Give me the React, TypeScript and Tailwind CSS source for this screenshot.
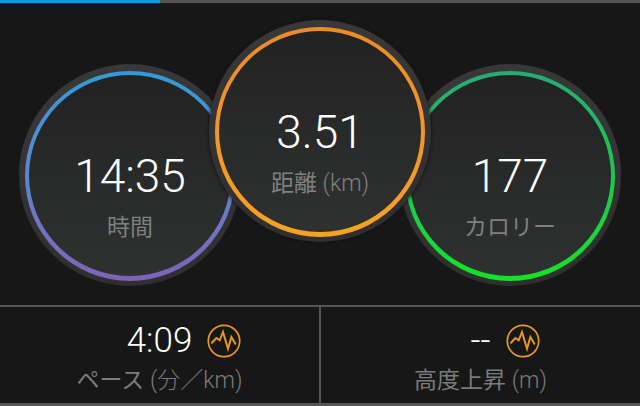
const jp = "font-['Roboto','Noto_Sans_CJK_JP',sans-serif]";

function PulseIcon() {
    return (
        <svg width="34" height="34" viewBox="0 0 34 34" fill="none" className="absolute left-full top-1/2 ml-[15px] -translate-y-1/2">
            <circle cx="17" cy="17" r="15.7" stroke="#e59a1e" strokeWidth="1.7" />
            <path d="M5 18.7 L9.4 14 L12.7 16.3 L16 8 L21 24.7 L24.4 13 L28.4 19.7" stroke="#e59a1e" strokeWidth="2" strokeLinejoin="miter" strokeLinecap="round" />
        </svg>
    );
}

function Dial({ value, label, unit, rim, outer }: { value: string; label: string; unit?: string; rim: string; outer: string }) {
    return (
        <div className={`rounded-full pt-[7px] pb-[5px] px-[6px] w-[222px] h-[222px] shrink-0 bg-gradient-to-b from-[#383838] to-[#2e2f2e] ${outer}`}>
            <div className={`h-full w-full rounded-full pt-[4px] pb-[5px] px-[4px] ${rim}`}>
                <div className="h-full w-full rounded-full flex flex-col items-center pt-[74px] bg-gradient-to-b from-[#222222] to-[#2f3131]">
                    <div className="text-[46px] leading-[54px] font-light text-white">{value}</div>
                    <div className="text-[23px] leading-[28px] mt-[11px] text-[#7f8080]">
                        {label}
                        {unit && <span className="font-light"> {unit}</span>}
                    </div>
                </div>
            </div>
        </div>
    );
}

function Stat({ value, label, unit, className }: { value: string; label: string; unit: string; className: string }) {
    return (
        <div className={`flex flex-col items-center pt-[13px] ${className}`}>
            <div className="relative text-[35px] leading-[42px] font-light text-white">
                {value}
                <PulseIcon />
            </div>
            <div className="text-[23px] leading-[28px] mt-[5px] text-[#7a7b7b]">
                {label}
                <span className="font-light"> {unit}</span>
            </div>
        </div>
    );
}

function App() {
    return (
        <div className={`w-[640px] h-[406px] overflow-hidden bg-[#171717] flex flex-col ${jp}`}>
            <div className="h-[3px] bg-[#555555] shrink-0">
                <div className="h-full w-[160px] bg-[#0d9ae0]" />
            </div>

            <div className="h-[302px] shrink-0 flex justify-center">
                <Dial
                    value="14:35"
                    label="時間"
                    outer="mt-[61px]"
                    rim="bg-gradient-to-b from-[#2e9bd8] via-[#5b86cf] to-[#7d62b8]"
                />
                <Dial
                    value="3.51"
                    label="距離"
                    unit="(km)"
                    outer="mt-[17px] -mx-[32px] z-10 shadow-[0_0_4px_#111111]"
                    rim="bg-gradient-to-b from-[#ee8a25] to-[#f6a223]"
                />
                <Dial
                    value="177"
                    label="カロリー"
                    outer="mt-[61px]"
                    rim="bg-gradient-to-b from-[#25ad72] via-[#1cc84c] to-[#14e324]"
                />
            </div>

            <div className="flex flex-1 border-t-2 border-b-[3px] border-[#555555]">
                <Stat value="4:09" label="ペース" unit="(分／km)" className="w-[321px] border-r-2 border-[#555555]" />
                <Stat value="--" label="高度上昇" unit="(m)" className="flex-1" />
            </div>
        </div>
    );
}

export default App
